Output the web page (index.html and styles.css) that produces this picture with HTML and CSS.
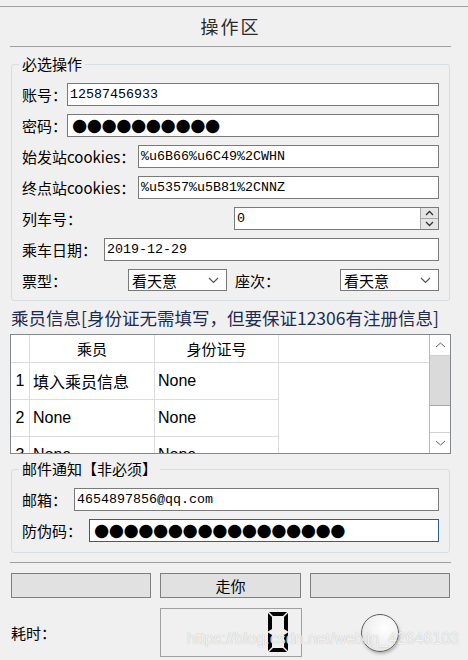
FILE: index.html
```html
<!DOCTYPE html>
<html lang="zh-CN">
<head>
    <meta charset="UTF-8">
    <meta name="viewport" content="width=device-width, initial-scale=1.0">
    <title>操作区</title>
    <link rel="stylesheet" href="styles.css">
</head>
<body>
    <div class="top-line"></div>

    <div class="panel">
        <div class="panel-title">操作区</div>
        <div class="separator"></div>

        <!-- required settings -->
        <fieldset class="group">
            <legend>必选操作</legend>
            <div class="rows">
                <div class="row">
                    <span class="lbl lbl-account">账号：</span>
                    <div class="field">12587456933</div>
                </div>
                <div class="row">
                    <span class="lbl lbl-account">密码：</span>
                    <div class="field dots">●●●●●●●●●●</div>
                </div>
                <div class="row">
                    <span class="lbl lbl-cookie">始发站cookies：</span>
                    <div class="field">%u6B66%u6C49%2CWHN</div>
                </div>
                <div class="row">
                    <span class="lbl lbl-cookie">终点站cookies：</span>
                    <div class="field">%u5357%u5B81%2CNNZ</div>
                </div>
                <div class="row">
                    <span class="lbl lbl-train">列车号：</span>
                    <div class="field spin">
                        <span class="spin-value">0</span>
                        <span class="spin-btns">
                            <span class="spin-btn">
                                <svg width="9" height="6" viewBox="0 0 9 6"><polyline points="1,5 4.5,1.5 8,5" fill="none" stroke="#333" stroke-width="1.3"/></svg>
                            </span>
                            <span class="spin-btn">
                                <svg width="9" height="6" viewBox="0 0 9 6"><polyline points="1,1 4.5,4.5 8,1" fill="none" stroke="#333" stroke-width="1.3"/></svg>
                            </span>
                        </span>
                    </div>
                </div>
                <div class="row">
                    <span class="lbl lbl-date">乘车日期：</span>
                    <div class="field">2019-12-29</div>
                </div>
                <div class="row row-combo">
                    <span class="lbl lbl-ticket">票型：</span>
                    <div class="combo">
                        <span>看天意</span>
                        <svg width="11" height="7" viewBox="0 0 11 7"><polyline points="1,1 5.5,5.5 10,1" fill="none" stroke="#555" stroke-width="1.2"/></svg>
                    </div>
                    <span class="lbl lbl-seat">座次：</span>
                    <div class="combo">
                        <span>看天意</span>
                        <svg width="11" height="7" viewBox="0 0 11 7"><polyline points="1,1 5.5,5.5 10,1" fill="none" stroke="#555" stroke-width="1.2"/></svg>
                    </div>
                </div>
            </div>
        </fieldset>

        <div class="passenger-title">乘员信息[身份证无需填写，但要保证12306有注册信息]</div>

        <div class="table">
            <div class="cells">
                <div class="cell head"></div>
                <div class="cell head">乘员</div>
                <div class="cell head">身份证号</div>
                <div class="cell head head-empty"></div>

                <div class="cell num">1</div>
                <div class="cell">填入乘员信息</div>
                <div class="cell">None</div>
                <div class="filler"></div>

                <div class="cell num">2</div>
                <div class="cell">None</div>
                <div class="cell">None</div>

                <div class="cell num">3</div>
                <div class="cell">None</div>
                <div class="cell">None</div>
            </div>
            <div class="scrollbar">
                <div class="sb-btn">
                    <svg width="11" height="6" viewBox="0 0 11 6"><polyline points="1,5 5.5,1 10,5" fill="none" stroke="#606060" stroke-width="1"/></svg>
                </div>
                <div class="sb-thumb"></div>
                <div class="sb-track"></div>
                <div class="sb-btn">
                    <svg width="11" height="6" viewBox="0 0 11 6"><polyline points="1,1 5.5,5 10,1" fill="none" stroke="#606060" stroke-width="1"/></svg>
                </div>
            </div>
        </div>

        <!-- optional mail notice -->
        <fieldset class="group group-mail">
            <legend>邮件通知【非必须】</legend>
            <div class="rows">
                <div class="row">
                    <span class="lbl lbl-mail">邮箱：</span>
                    <div class="field">4654897856@qq.com</div>
                </div>
                <div class="row">
                    <span class="lbl lbl-code">防伪码：</span>
                    <div class="field dots focused">●●●●●●●●●●●●●●●●●</div>
                </div>
            </div>
        </fieldset>

        <div class="separator separator-bottom"></div>

        <div class="actions">
            <div class="btn"></div>
            <div class="btn">走你</div>
            <div class="btn"></div>
        </div>

        <div class="timer-row">
            <span class="lbl lbl-time">耗时：</span>
            <div class="lcd">
                <svg width="20" height="40" viewBox="0 0 20 40">
                    <polygon points="1,0 19,0 15,4 5,4" fill="#000"/>
                    <polygon points="0,1 4,5 4,17 0,19.5" fill="#000"/>
                    <polygon points="20,1 20,19.5 16,17 16,5" fill="#000"/>
                    <polygon points="0,20.5 4,23 4,35 0,39" fill="#000"/>
                    <polygon points="20,20.5 20,39 16,35 16,23" fill="#000"/>
                    <polygon points="1,40 5,36 15,36 19,40" fill="#000"/>
                </svg>
            </div>
            <div class="led"></div>
        </div>
    </div>

    <div class="watermark">https://blog.csdn.net/weixin_42646103</div>
</body>
</html>
```

FILE: styles.css
```css
* {
    box-sizing: border-box;
}

body {
    margin: 0;
    width: 468px;
    height: 660px;
    overflow: hidden;
    position: relative;
    background-color: #f0f0f0;
    font-family: "Noto Sans CJK SC", "Liberation Sans", sans-serif;
    font-size: 15px;
    color: #000;
}

.top-line {
    margin-top: 6px;
    height: 1px;
    background-color: #a0a0a0;
}

.panel {
    margin: 0 17px 0 10px;
}

.panel-title {
    height: 39px;
    line-height: 39px;
    text-align: center;
    font-size: 18px;
    letter-spacing: 2px;
    color: #2a2a2a;
}

.separator {
    height: 1px;
    background-color: #a0a0a0;
}

.separator-bottom {
    margin-top: 9px;
}

.group {
    margin: 8px 1px 0;
    padding: 10px 10px 9px;
    border: 1px solid #d6dde5;
    border-radius: 3px;
    min-width: 0;
}

.group legend {
    font-size: 15px;
    line-height: 18px;
    padding: 0 3px;
    margin-left: -3px;
}

.group-mail {
    margin-top: 6px;
    padding-bottom: 10px;
}

.rows {
    display: flex;
    flex-direction: column;
    gap: 8px;
}

.row {
    display: flex;
    align-items: center;
    height: 23px;
}

.row-combo {
    height: 22px;
}

.lbl {
    flex: none;
    white-space: nowrap;
}

.lbl-account { width: 45px; }
.lbl-cookie { width: 116px; }
.lbl-train { width: 212px; }
.lbl-date { width: 82px; }
.lbl-ticket { width: 106px; }
.lbl-seat { width: 105px; margin-left: 8px; }
.lbl-mail { width: 52px; }
.lbl-code { width: 67px; }
.lbl-time { width: 149px; }

.field {
    flex: 1;
    height: 23px;
    background-color: #fff;
    border: 1px solid #7a7a7a;
    padding-left: 2px;
    font-family: "Liberation Mono", monospace;
    font-size: 13.33px;
    line-height: 21px;
    white-space: nowrap;
    overflow: hidden;
}

.field.focused {
    border-color: #2a5f93;
}

.dots {
    font-family: "DejaVu Sans", sans-serif;
    font-size: 17.5px;
    letter-spacing: -0.5px;
    padding-left: 4px;
    line-height: 21px;
}

.spin {
    display: flex;
    align-items: stretch;
    padding-left: 2px;
}

.spin-value {
    flex: 1;
}

.spin-btns {
    width: 18px;
    display: flex;
    flex-direction: column;
}

.spin-btn {
    flex: 1;
    display: flex;
    align-items: center;
    justify-content: center;
    background-color: #e5e5e5;
    border-left: 1px solid #a8a8a8;
}

.spin-btn + .spin-btn {
    border-top: 1px solid #a8a8a8;
}

.combo {
    flex: none;
    width: 99px;
    height: 22px;
    background-color: #fff;
    border: 1px solid #7a7a7a;
    display: flex;
    align-items: center;
    justify-content: space-between;
    padding: 0 7px 0 3px;
}

.passenger-title {
    margin: 6px 0 0 1px;
    height: 22px;
    line-height: 22px;
    font-size: 17.5px;
    color: #1d2a52;
    white-space: nowrap;
}

.table {
    margin-top: 5px;
    height: 120px;
    border: 1px solid #828790;
    background-color: #fff;
    display: flex;
    overflow: hidden;
}

.cells {
    width: 418px;
    flex: none;
    display: grid;
    grid-template-columns: 19px 125px 124px 150px;
    grid-template-rows: 28px 37px 37px 37px;
    font-family: "Liberation Sans", "Noto Sans CJK SC", sans-serif;
    font-size: 16px;
}

.cell {
    display: flex;
    align-items: center;
    padding-left: 3px;
    border-right: 1px solid #dcdcdc;
    border-bottom: 1px solid #dcdcdc;
    white-space: nowrap;
}

.cell.head {
    justify-content: center;
    padding-left: 0;
    font-family: "Noto Sans CJK SC", sans-serif;
    font-size: 15px;
}

.cell.head-empty {
    border-right: none;
}

.cell.num {
    justify-content: center;
    padding-left: 0;
}

.filler {
    grid-column: 4;
    grid-row: 2 / 5;
}

.scrollbar {
    flex: 1;
    display: flex;
    flex-direction: column;
    border-left: 1px solid #b9b9b9;
}

.sb-btn {
    height: 21px;
    display: flex;
    align-items: center;
    justify-content: center;
    background-color: #fff;
    border-bottom: 1px solid #d0d0d0;
}

.sb-btn:last-child {
    border-bottom: none;
    border-top: 1px solid #d0d0d0;
}

.sb-thumb {
    height: 50px;
    background-color: #dadada;
    border-bottom: 1px solid #a8a8a8;
}

.sb-track {
    flex: 1;
    background-color: #fff;
}

.actions {
    margin: 10px 1px 0;
    display: grid;
    grid-template-columns: repeat(3, 1fr);
    gap: 9px;
}

.btn {
    height: 25px;
    line-height: 23px;
    text-align: center;
    background-color: #e1e1e1;
    border: 1px solid #7f7f7f;
}

.timer-row {
    margin: 10px 0 0 1px;
    height: 49px;
    display: flex;
    align-items: center;
}

.lcd {
    width: 142px;
    height: 49px;
    border: 1px solid #a0a0a0;
    display: flex;
    align-items: center;
    justify-content: flex-end;
    padding: 0 13px 1px 0;
}

.led {
    width: 38px;
    height: 38px;
    margin-left: 59px;
    border-radius: 50%;
    border: 1px solid #5e5e5e;
    background: radial-gradient(circle at 62% 35%, #ffffff 0%, #f2f2f2 45%, #dcdcdc 100%);
    box-shadow: 1px 2px 3px rgba(0, 0, 0, 0.25);
}

.watermark {
    position: absolute;
    left: 187px;
    top: 630px;
    font-family: "Liberation Sans", sans-serif;
    font-size: 16px;
    line-height: 18px;
    color: rgba(255, 255, 255, 0.85);
    text-shadow: 0 0 1px rgba(0, 0, 0, 0.3);
    white-space: nowrap;
}
```
